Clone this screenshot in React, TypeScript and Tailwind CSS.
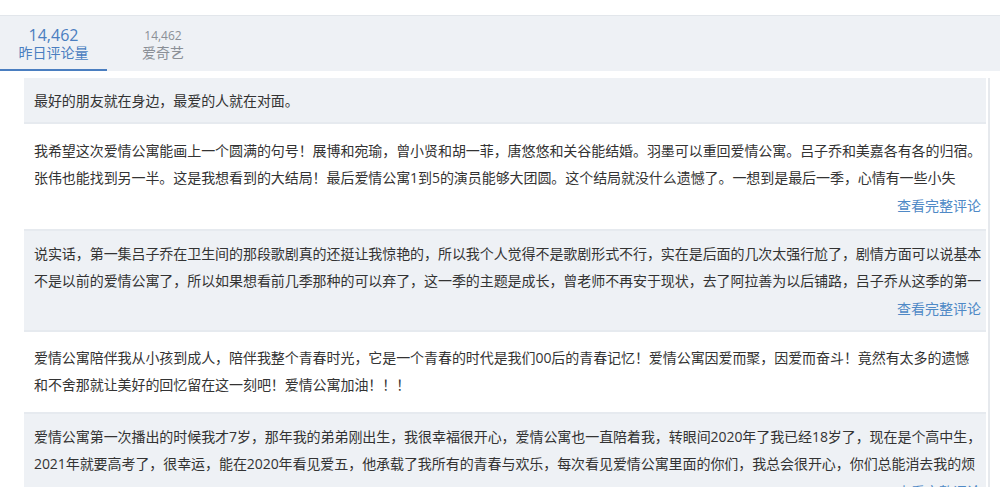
import React from "react";

const items: { lines: string[]; link: boolean; gray: boolean; pad: string }[] = [
  { lines: ["最好的朋友就在身边，最爱的人就在对面。"], link: false, gray: true, pad: "pt-[9px] pb-[8px]" },
  {
    lines: [
      "我希望这次爱情公寓能画上一个圆满的句号！展博和宛瑜，曾小贤和胡一菲，唐悠悠和关谷能结婚。羽墨可以重回爱情公寓。吕子乔和美嘉各有各的归宿。",
      "张伟也能找到另一半。这是我想看到的大结局！最后爱情公寓1到5的演员能够大团圆。这个结局就没什么遗憾了。一想到是最后一季，心情有一些小失",
    ],
    link: true,
    gray: false,
    pad: "pt-[13px] pb-[8px]",
  },
  {
    lines: [
      "说实话，第一集吕子乔在卫生间的那段歌剧真的还挺让我惊艳的，所以我个人觉得不是歌剧形式不行，实在是后面的几次太强行尬了，剧情方面可以说基本",
      "不是以前的爱情公寓了，所以如果想看前几季那种的可以弃了，这一季的主题是成长，曾老师不再安于现状，去了阿拉善为以后铺路，吕子乔从这季的第一",
    ],
    link: true,
    gray: true,
    pad: "pt-[9px] pb-[6px]",
  },
  {
    lines: [
      "爱情公寓陪伴我从小孩到成人，陪伴我整个青春时光，它是一个青春的时代是我们00后的青春记忆！爱情公寓因爱而聚，因爱而奋斗！竟然有太多的遗憾",
      "和不舍那就让美好的回忆留在这一刻吧！爱情公寓加油！！！",
    ],
    link: false,
    gray: false,
    pad: "pt-[12px] pb-[14px]",
  },
  {
    lines: [
      "爱情公寓第一次播出的时候我才7岁，那年我的弟弟刚出生，我很幸福很开心，爱情公寓也一直陪着我，转眼间2020年了我已经18岁了，现在是个高中生，",
      "2021年就要高考了，很幸运，能在2020年看见爱五，他承载了我所有的青春与欢乐，每次看见爱情公寓里面的你们，我总会很开心，你们总能消去我的烦",
    ],
    link: true,
    gray: true,
    pad: "pt-[9px] pb-[8px]",
  },
];

export default function App() {
  return (
    <div
      className="w-[1000px] h-[487px] overflow-hidden bg-white text-[#333]"
      style={{ fontFamily: '"Open Sans", "Noto Sans CJK SC", sans-serif' }}
    >
      <div className="h-[16px] border-b border-[#e2e6eb]" />
      <div className="h-[55px] bg-[#eef1f5] flex">
        <div className="w-[107px] flex flex-col items-center justify-center border-b-2 border-[#4a7ec0] pt-[2px]">
          <div className="text-[16px] leading-[18px] text-[#4a7ec0]">14,462</div>
          <div className="text-[14px] leading-[18px] text-[#4a7ec0]">昨日评论量</div>
        </div>
        <div className="w-[112px] flex flex-col items-center justify-center pt-[2px]">
          <div className="text-[12px] leading-[16px] text-[#8a8f96]">14,462</div>
          <div className="text-[14px] leading-[18px] text-[#8a8f96]">爱奇艺</div>
        </div>
      </div>
      <div className="pl-[24px] pt-[7px]">
        <div className="w-[966px] border-r-2 border-[#e6e9ed]">
          <div className="w-[962px]">
            {items.map((it, i) => (
              <div
                key={i}
                className={`border-b-2 border-[#e6eaef] pl-[10px] pr-[5px] ${
                  it.gray ? "bg-[#eef1f5]" : "bg-white"
                } ${it.pad}`}
              >
                {it.lines.map((l, j) => (
                  <div
                    key={j}
                    className="text-[14px] leading-[27px] tracking-[-0.07px] whitespace-nowrap overflow-hidden"
                  >
                    {l}
                  </div>
                ))}
                {it.link && (
                  <div className="text-right text-[14px] leading-[30px] text-[#4f89c6]">
                    查看完整评论
                  </div>
                )}
              </div>
            ))}
          </div>
        </div>
      </div>
    </div>
  );
}
